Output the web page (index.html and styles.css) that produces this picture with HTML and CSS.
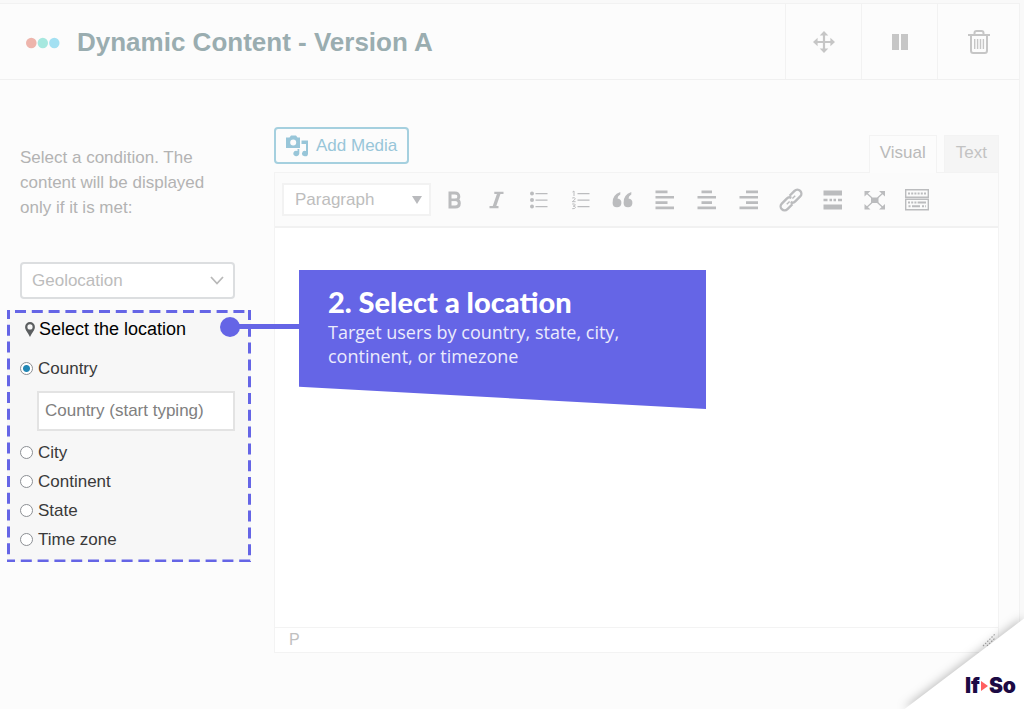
FILE: index.html
```html
<!DOCTYPE html>
<html lang="en">
<head>
<meta charset="utf-8">
<meta name="viewport" content="width=device-width, initial-scale=1">
<title>Dynamic Content - Version A</title>
<link rel="stylesheet" href="styles.css">
</head>
<body>
<main class="panel">
  <header class="panel-header">
    <svg class="dots" width="36" height="14" viewBox="0 0 36 14" aria-hidden="true"><circle cx="6.300" cy="8" r="5.300" fill="#eeb5ac"/><circle cx="17.800" cy="8" r="5.200" fill="#a6e8df"/><circle cx="29.300" cy="8" r="5.200" fill="#a3e0f2"/></svg>
    <h1 class="title">Dynamic Content - Version A</h1>
    <div class="actions">
      <button class="action" type="button" aria-label="Move">
        <svg width="22" height="22" viewBox="0 0 22 22"><path d="M11 3v16M3 11h16" stroke="currentColor" stroke-width="2.200" fill="none"/><path d="M11 0l4.300 4.600H6.700zM11 22l4.300-4.600H6.700zM0 11l4.600-4.300v8.600zM22 11l-4.600-4.300v8.600z" fill="currentColor"/></svg>
      </button>
      <button class="action" type="button" aria-label="Pause">
        <svg width="18" height="18" viewBox="0 0 18 18"><path d="M1 1h7v16H1zM10 1h7v16h-7z" fill="currentColor"/></svg>
      </button>
      <button class="action action-last" type="button" aria-label="Delete">
        <svg width="22" height="25" viewBox="0 0 22 25" fill="none" stroke="currentColor"><path d="M0 6h22" stroke-width="2"/><path d="M6.500 5.500V4Q6.500 2 8.500 2h5Q15.500 2 15.500 4v1.500" stroke-width="2"/><path d="M3 6v15.500Q3 24 5.200 24h11.600Q19 24 19 21.500V6" stroke-width="2"/><path d="M6.700 10v10M9.600 10v10M12.500 10v10M15.400 10v10" stroke-width="1.400"/></svg>
      </button>
    </div>
  </header>

  <div class="content">
    <aside class="conditions">
      <label class="intro" for="condition">Select a condition. The content will be displayed only if it is met:</label>
      <div class="select-wrap">
        <select class="condition-select" id="condition"><option>Geolocation</option></select>
        <svg class="chevron" width="14" height="9" viewBox="0 0 14 9"><path d="M1 1l6 6.500L13 1" fill="none" stroke="#b9b9b9" stroke-width="1.800"/></svg>
      </div>

      <section class="location">
        <svg class="dashes" width="100%" height="100%" aria-hidden="true">
          <g stroke="#6565e6" stroke-width="3" stroke-dasharray="11 5.800">
            <line x1="8" y1="1.500" x2="100%" y2="1.500"/>
            <line x1="0" y1="100%" x2="100%" y2="100%" stroke-width="5" stroke-dashoffset="3"/>
            <line x1="1.500" y1="0" x2="1.500" y2="100%" stroke-dashoffset="2"/>
            <line x1="100%" y1="0" x2="100%" y2="100%" stroke-width="6" stroke-dashoffset="1"/>
          </g>
        </svg>
        <h2 class="location-title">
          <svg width="10" height="15" viewBox="0 0 10 15"><path fill-rule="evenodd" d="M5 0a4.900 4.900 0 0 1 4.900 4.900C9.900 8.200 7 10.500 5 15 3 10.500.1 8.200.1 4.900A4.900 4.900 0 0 1 5 0zm0 2.300a2.600 2.600 0 1 0 0 5.200 2.600 2.600 0 0 0 0-5.200z" fill="#5b5e60"/></svg>
          Select the location
        </h2>
        <label class="choice choice-first"><input type="radio" name="where" checked>Country</label>
        <input class="country" type="text" placeholder="Country (start typing)" aria-label="Country">
        <label class="choice"><input type="radio" name="where">City</label>
        <label class="choice"><input type="radio" name="where">Continent</label>
        <label class="choice"><input type="radio" name="where">State</label>
        <label class="choice"><input type="radio" name="where">Time zone</label>

        <div class="connector"></div>
        <div class="callout">
          <h3 class="callout-title">2. Select a location</h3>
          <p class="callout-text">Target users by country, state, city, continent, or timezone</p>
        </div>
      </section>
    </aside>

    <section class="editor">
      <div class="editor-top">
        <button class="media" type="button">
          <svg width="22" height="22" viewBox="0 0 22 22" fill="currentColor"><path fill-rule="evenodd" d="M1 2.500h2.500L5 .5h5l1.500 2H14V13H0V2.500zM7.200 4.600a3 3 0 1 0 0 6 3 3 0 0 0 0-6z"/><path d="M15.500 5.500H22V18.500a3 2.700 0 1 1-2-2.500V9h-4.500z"/><path d="M11.500 14H13.300V18.500a3 2.700 0 1 1-1.800-2.500z"/></svg>
          Add Media
        </button>
        <div class="tabs">
          <button class="tab tab-active" type="button">Visual</button>
          <button class="tab" type="button">Text</button>
        </div>
      </div>
      <div class="frame">
        <div class="toolbar">
          <div class="format-wrap">
            <select class="format" aria-label="Format"><option>Paragraph</option></select>
            <svg class="arrow" width="10" height="8" viewBox="0 0 10 8"><path d="M0 0h10L5 8z" fill="#b9babd"/></svg>
          </div>
          <div class="tools">
            <button class="tool" type="button" aria-label="Bold"><svg width="24" height="24" viewBox="0 0 24 24"><path d="M7 5v14h5.200q4.100 0 4.100-3.800 0-2.600-2.500-3.400 2-.8 2-3.200Q15.800 5 11.800 5z" fill="none" stroke="currentColor" stroke-width="3"/><path d="M7.500 11.800h5.500" stroke="currentColor" stroke-width="2.600"/></svg></button>
            <button class="tool" type="button" aria-label="Italic"><svg width="24" height="24" viewBox="0 0 24 24"><path d="M9.300 4.800h9.200M4.500 19.200h9" stroke="currentColor" stroke-width="2.200"/><path d="M14 5L9.200 19" stroke="currentColor" stroke-width="3.400"/></svg></button>
            <button class="tool" type="button" aria-label="Bulleted list"><svg width="24" height="24" viewBox="0 0 24 24" fill="currentColor"><circle cx="5" cy="5.500" r="2"/><circle cx="5" cy="12" r="2"/><circle cx="5" cy="18.500" r="2"/><path d="M8.500 5h12v1.300h-12zM8.500 11.500h12v1.300h-12zM8.500 18h12v1.300h-12z"/></svg></button>
            <button class="tool" type="button" aria-label="Numbered list"><svg width="24" height="24" viewBox="0 0 24 24" fill="none" stroke="currentColor"><path d="M8.500 5.600h12M8.500 12.100h12M8.500 18.600h12" stroke-width="1.300"/><path d="M3.500 4L5 3v5M3.200 10q3-1 3 .7 0 1-2.900 3h3.300M3.200 16q3-.5 3 .8t-2 1.300q2.200 0 2.200 1.400t-3.200 1.200" stroke-width="1"/></svg></button>
            <button class="tool" type="button" aria-label="Quote"><svg width="24" height="24" viewBox="0 0 24 24" fill="currentColor"><path d="M9.300 4v2.400Q6.600 8 6.500 10.600a4.400 4.400 0 1 1-4.900 4.400Q1 7 9.300 4zM20.300 4v2.400Q17.600 8 17.500 10.600a4.400 4.400 0 1 1-4.900 4.400Q12 7 20.300 4z"/></svg></button>
            <button class="tool" type="button" aria-label="Align left"><svg width="24" height="24" viewBox="0 0 24 24" fill="currentColor"><path d="M2.500 2.500h12v2.700h-12zM2.500 7.900H21v2.700H2.500zM2.500 13.300h12V16h-12zM2.500 18.500H21v2.700H2.500z"/></svg></button>
            <button class="tool" type="button" aria-label="Align center"><svg width="24" height="24" viewBox="0 0 24 24" fill="currentColor"><path d="M6.500 2.500H17v2.700H6.500zM2.500 7.900H21v2.700H2.500zM6.500 13.300H17V16H6.500zM2.500 18.500H21v2.700H2.500z"/></svg></button>
            <button class="tool" type="button" aria-label="Align right"><svg width="24" height="24" viewBox="0 0 24 24" fill="currentColor"><path d="M9 2.500h12v2.700H9zM2.500 7.900H21v2.700H2.500zM9 13.300h12V16H9zM2.500 18.500H21v2.700H2.500z"/></svg></button>
            <button class="tool" type="button" aria-label="Link"><svg width="24" height="24" viewBox="0 0 24 24" fill="none" stroke="currentColor" stroke-width="2.400"><g transform="rotate(-45 12 12)"><path d="M10 16H3a4 4 0 0 1 0-8h7a4 4 0 0 1 3.800 2.800M14 8h7a4 4 0 0 1 0 8h-7a4 4 0 0 1-3.800-2.800"/><path d="M6 12h4M14 12h4" stroke-width="1.400"/></g></svg></button>
            <button class="tool" type="button" aria-label="Read more"><svg width="24" height="24" viewBox="0 0 24 24" fill="currentColor"><path d="M2.500 2.500H21v5H2.500zM2.500 16.500H21v5H2.500zM2.500 10.800h4v2.500h-4zM8.500 10.800H11v2.500H8.500zM12.500 10.800H15v2.500h-2.500zM17 10.800h4v2.500h-4z"/></svg></button>
            <button class="tool" type="button" aria-label="Fullscreen"><svg width="24" height="24" viewBox="0 0 24 24"><path d="M8 9.500h7.500v5.500H8z" fill="currentColor"/><path d="M3 4.500l6 5.500M20.500 4.500l-6 5.500M3 20l6-5.500M20.500 20l-6-5.500" stroke="currentColor" stroke-width="1.300"/><path d="M1.500 3h6l-6 5.500zM22 3h-6l6 5.500zM1.500 21.500h6l-6-5.500zM22 21.500h-6l6-5.500z" fill="currentColor"/></svg></button>
            <button class="tool" type="button" aria-label="Toolbar toggle"><svg width="24" height="24" viewBox="0 0 24 24"><path d="M.7 1.700h22.600v7.600H.7zM.7 11.200h22.600v10.600H.7z" fill="none" stroke="currentColor" stroke-width="1.400"/><path d="M3 5.500h18M3 14.500h11M17 18.300h4" stroke="currentColor" stroke-width="2" stroke-dasharray="2 1.200"/><path d="M14 14.500h7M3.500 18.300h2M7 18.300h8" stroke="currentColor" stroke-width="2"/></svg></button>
          </div>
        </div>
        <textarea class="writing" aria-label="Content"></textarea>
        <div class="status">P
          <svg width="14" height="14" viewBox="0 0 14 14" aria-hidden="true"><path d="M1 13L13 1M5 13l8-8M9 13l4-4" stroke="#aaa" stroke-width="1.200" stroke-dasharray="1.500 1.500"/></svg>
        </div>
      </div>
    </section>
  </div>
</main>

<div class="corner">
  <svg class="corner-shape" width="140" height="106" viewBox="0 0 140 106" aria-hidden="true"><path d="M18 108L150 8v100z" fill="#fff"/></svg>
  <div class="brand">If<svg width="7" height="10" viewBox="0 0 7 10"><path d="M0 0l7 5-7 5z" fill="#ff5f5f"/></svg>So</div>
</div>
</body>
</html>
```
FILE: styles.css
```css
* {
  box-sizing: border-box;
}

body {
  position: relative;
  display: flex;
  min-height: 100vh;
  margin: 0;
  padding: 3px 4px 0 0;
  overflow-x: hidden;
  background: #f9f9f9;
  color: #b5b5b5;
  font: 17px/25px "Liberation Sans", Arial, sans-serif;
}

button,
input,
select,
textarea {
  font: inherit;
  color: inherit;
}

svg {
  flex: none;
}

.panel {
  flex: 1;
  display: flex;
  flex-direction: column;
  border: solid #f2f2f2;
  border-width: 1px 1px 0 0;
  background: #fcfcfc;
}

.panel-header {
  display: flex;
  align-items: center;
  height: 76px;
  padding-left: 25px;
  border-bottom: 1px solid #f0f0f0;
}

.title {
  flex: 1;
  margin: 0 0 0 16px;
  color: #9aadb0;
  font-size: 26px;
  line-height: 32px;
}

.actions {
  display: flex;
  align-self: stretch;
}

.action {
  display: flex;
  align-items: center;
  justify-content: center;
  width: 76px;
  padding: 0;
  border: 0;
  border-left: 1px solid #f2f2f2;
  background: none;
  color: #c6c6c6;
}

.action-last {
  width: 82px;
}

.content {
  flex: 1;
  display: grid;
  grid-template-columns: 215px 1fr;
  gap: 39px;
  padding: 47px 20px 56px;
}

.conditions {
  padding-top: 18px;
}

.intro {
  display: block;
  color: #b3b3b3;
}

.select-wrap,
.format-wrap {
  display: grid;
  align-items: center;
}

.select-wrap > *,
.format-wrap > * {
  grid-area: 1 / 1;
}

.select-wrap {
  margin-top: 42px;
}

.condition-select {
  height: 37px;
  padding: 0 10px;
  border: 2px solid #dcdee0;
  border-radius: 4px;
  appearance: none;
  background: #fff;
  color: #bcbcbc;
}

.chevron {
  justify-self: end;
  margin-right: 11px;
  pointer-events: none;
}

.location {
  position: relative;
  margin: 11px -16px 0 -13px;
  padding: 7px 16px 8px 13px;
  background: #f7f7f7;
  color: #3a3a3a;
}

.dashes {
  position: absolute;
  inset: 0;
}

.location-title {
  display: flex;
  align-items: center;
  gap: 4px;
  margin: 0 0 0 5px;
  color: #000;
  font-size: 18px;
  font-weight: 400;
  line-height: 24px;
}

.choice {
  display: flex;
  align-items: center;
  gap: 5px;
  height: 29px;
}

.choice-first {
  margin-top: 13px;
}

.choice input {
  width: 13px;
  height: 13px;
  margin: 0;
  border: 1px solid #8c8f94;
  border-radius: 50%;
  appearance: none;
  background: #fff;
}

.choice input:checked {
  background: radial-gradient(circle, #2287b5 3px, #fff 4px);
}

.country {
  display: block;
  width: calc(100% - 17px);
  height: 40px;
  margin: 8px 0 7px 17px;
  padding: 0 6px;
  border: 2px solid #e3e3e3;
  background: #fff;
}

.country::placeholder {
  color: #808080;
  opacity: 1;
}

.connector {
  position: absolute;
  top: 14px;
  left: 223px;
  width: 70px;
  height: 5px;
  background: #6565e6;
}

.connector::before {
  content: "";
  position: absolute;
  top: -7px;
  left: -10px;
  width: 20px;
  height: 20px;
  border-radius: 50%;
  background: #6565e6;
}

.callout {
  position: absolute;
  z-index: 1;
  top: -40px;
  left: 292px;
  width: 407px;
  padding: 16px 30px 41px 29px;
  background: #6565e6;
  clip-path: polygon(0 0, 100% 0, 100% 100%, 0 84%);
  color: #fff;
}

.callout-title {
  margin: 0;
  font: 900 29px/32px Lato, sans-serif;
}

.callout-text {
  max-width: 320px;
  margin: 2px 0 0;
  color: #ebebfc;
  font: 18px/24px "Open Sans", sans-serif;
}

.editor {
  display: flex;
  flex-direction: column;
  min-width: 0;
}

.editor-top {
  display: flex;
  justify-content: space-between;
  height: 45px;
}

.media {
  display: flex;
  align-items: center;
  gap: 8px;
  height: 37px;
  padding: 0 10px;
  border: 2px solid #a5d0df;
  border-radius: 4px;
  background: #fcfcfc;
  color: #98c6d9;
}

.tabs {
  display: flex;
  align-items: flex-end;
  gap: 7px;
}

.tab {
  height: 37px;
  padding: 0 11px 3px;
  border: 1px solid #f3f3f3;
  border-bottom: 0;
  background: #f5f5f5;
  color: #c3c3c3;
}

.tab-active {
  z-index: 1;
  height: 38px;
  margin-bottom: -1px;
  padding: 0 10px 4px;
  background: #fcfcfc;
  color: #bababa;
}

.frame {
  flex: 1;
  display: flex;
  flex-direction: column;
  border: 1px solid #f3f3f3;
  background: #fff;
}

.toolbar {
  display: flex;
  align-items: center;
  gap: 3px;
  height: 55px;
  padding-left: 7px;
  border-bottom: 2px solid #f1f1f1;
  background: #fbfbfb;
}

.format {
  width: 149px;
  height: 33px;
  padding: 0 11px;
  border: 2px solid #f2f2f2;
  appearance: none;
  background: #fff;
  color: #bdbdbd;
}

.arrow {
  justify-self: end;
  margin-right: 9px;
  pointer-events: none;
}

.tools {
  display: flex;
}

.tool {
  display: flex;
  align-items: center;
  justify-content: center;
  width: 42px;
  height: 32px;
  padding: 0;
  border: 0;
  background: none;
  color: #bbbcbe;
}

.writing {
  flex: 1;
  min-height: 200px;
  border: 0;
  background: #fff;
  resize: none;
}

.status {
  display: flex;
  align-items: center;
  justify-content: space-between;
  padding: 0 2px 0 14px;
  border-top: 1px solid #f3f3f3;
  color: #c0c0c0;
  font-size: 16px;
  line-height: 24px;
}

.corner {
  position: absolute;
  right: 0;
  bottom: 0;
  display: grid;
  overflow: hidden;
}

.corner > * {
  grid-area: 1 / 1;
}

.corner-shape {
  filter: drop-shadow(-1px -1px 5px rgba(0, 0, 0, 0.25));
}

.brand {
  z-index: 1;
  display: flex;
  align-items: center;
  align-self: end;
  justify-self: end;
  gap: 1px;
  padding: 0 8px 11px 0;
  color: #1c0a44;
  font: 900 21px/24px Inter, sans-serif;
}
```
